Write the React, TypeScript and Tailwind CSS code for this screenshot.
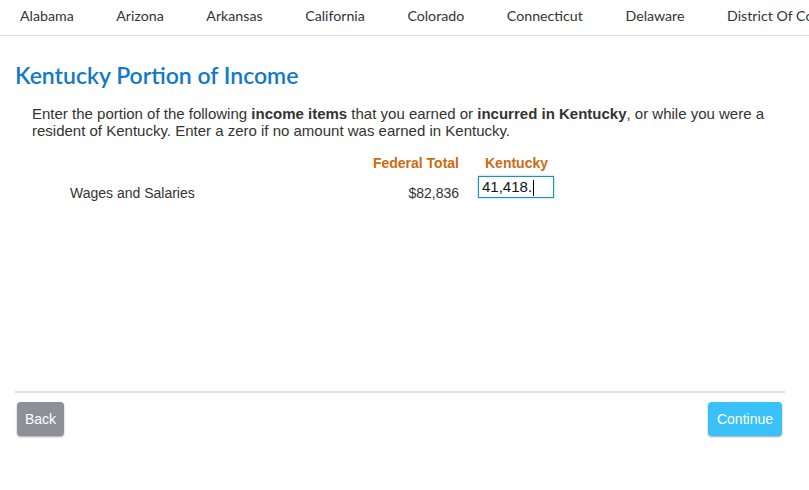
import React from 'react';

const states = ['Alabama', 'Arizona', 'Arkansas', 'California', 'Colorado', 'Connecticut', 'Delaware', 'District Of Columbia'];

export default function App() {
  return (
    <div className="h-[490px] w-[809px] overflow-hidden bg-white font-['Liberation_Sans',Arial,sans-serif] text-[#333]">
      <nav className="flex h-[36px] items-center gap-[42.6px] overflow-hidden whitespace-nowrap border-b border-[#dcdcdc] pb-[4px] pl-5 font-['Lato',sans-serif] text-[14.2px] text-[#333]">
        {states.map((s) => (
          <span key={s} className="shrink-0">
            {s}
          </span>
        ))}
      </nav>

      <main className="px-[15px] pt-[26px]">
        <h1 className="font-['Lato',sans-serif] text-[23px] font-semibold leading-[27px] text-[#1479c4]">
          Kentucky Portion of Income
        </h1>

        <p className="mt-[16px] w-[770px] pl-[17px] text-[15px] leading-[17px]">
          Enter the portion of the following <b>income items</b> that you earned or <b>incurred in Kentucky</b>, or while you
          were a resident of Kentucky. Enter a zero if no amount was earned in Kentucky.
        </p>

        <div className="mt-[14px] grid grid-cols-[444px_95px] items-start text-[14px]">
          <div className="text-right font-bold text-[#cc6b0f]">Federal Total</div>
          <div className="pl-[26px] font-bold text-[#cc6b0f]">Kentucky</div>

          <div className="mt-[2px] flex justify-between pl-[55px] pt-[7px]">
            <span>Wages and Salaries</span>
            <span>$82,836</span>
          </div>
          <div className="mt-[2px] pl-[19px]">
            <div className="flex h-[22px] w-[76px] items-center border border-[#1a8fd6] px-[3px] pt-px text-[15px] text-[#111] shadow-[0_0_2px_#7cc4f0]">
              41,418.<span className="ml-px inline-block h-[16px] w-px bg-black" />
            </div>
          </div>
        </div>

        <div className="mt-[187px] w-[770px] border-t-2 border-[#e0e0e0]" />

        <div className="mt-[9px] flex w-[767px] justify-between pl-[2px]">
          <button className="h-[34px] rounded-[4px] bg-[#8e9097] px-[8px] text-[14px] text-white shadow-[0_1px_2px_rgba(0,0,0,0.35)]">
            Back
          </button>
          <button className="h-[34px] rounded-[4px] bg-[#3ac1fa] px-[9px] text-[14px] text-white shadow-[0_1px_2px_rgba(0,0,0,0.35)]">
            Continue
          </button>
        </div>
      </main>
    </div>
  );
}
